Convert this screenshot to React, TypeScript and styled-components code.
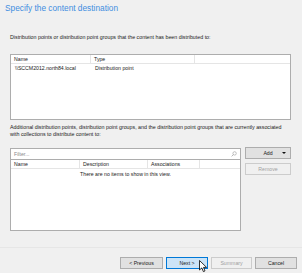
import styled, { createGlobalStyle } from "styled-components";

const Global = createGlobalStyle`
  html, body {
    margin: 0;
    padding: 0;
    background: #f0f0f0;
  }
  body {
    font-family: "Liberation Sans", Arial, sans-serif;
    color: #1a1a1a;
  }
`;

const Page = styled.div`
  width: 302px;
  height: 273px;
  box-sizing: border-box;
  display: flex;
  flex-direction: column;
  background: #f0f0f0;
  overflow: hidden;
`;

const Title = styled.div`
  font-size: 8.3px;
  color: #3f8ee0;
  padding: 2px 0 0 5px;
  height: 12px;
  line-height: 12px;
`;

const Body = styled.div`
  padding: 0 11px 0 10px;
  display: flex;
  flex-direction: column;
`;

const Label = styled.div<{ $top: number }>`
  font-size: 5.3px;
  line-height: 7px;
  max-width: 277px;
  margin-top: ${({ $top }) => $top}px;
`;

const ListBox = styled.div<{ $h: number; $top?: number }>`
  background: #fff;
  border: 1px solid #adadad;
  height: ${({ $h }) => $h}px;
  margin-top: ${({ $top }) => $top ?? 0}px;
  box-sizing: border-box;
  display: flex;
  flex-direction: column;
  font-size: 5.2px;
`;

const Header = styled.div`
  display: flex;
  height: 8px;
  border-bottom: 1px solid #e5e5e5;
`;

const HeadCell = styled.div<{ $w?: number }>`
  width: ${({ $w }) => ($w ? `${$w}px` : "auto")};
  flex: ${({ $w }) => ($w ? "none" : "1")};
  padding-left: 3px;
  line-height: 8px;
  border-right: ${({ $w }) => ($w ? "1px solid #e5e5e5" : "none")};
  box-sizing: border-box;
`;

const Row = styled.div`
  display: flex;
  height: 9px;
  line-height: 9px;
`;

const Cell = styled.div<{ $w?: number }>`
  width: ${({ $w }) => ($w ? `${$w}px` : "auto")};
  flex: ${({ $w }) => ($w ? "none" : "1")};
  padding-left: 4px;
  box-sizing: border-box;
`;

const Empty = styled.div`
  text-align: center;
  line-height: 9px;
  margin-top: 1px;
`;

const Split = styled.div`
  display: flex;
  gap: 4px;
  margin-top: 10px;
`;

const LeftCol = styled.div`
  width: 231px;
  display: flex;
  flex-direction: column;
`;

const RightCol = styled.div`
  flex: 1;
  display: flex;
  flex-direction: column;
  gap: 4px;
`;

const Filter = styled.div`
  height: 11px;
  background: #fff;
  border: 1px solid #adadad;
  border-bottom: none;
  box-sizing: border-box;
  display: flex;
  align-items: center;
  justify-content: space-between;
  padding: 0 3px;
  font-size: 5.2px;
  color: #8a8a8a;
`;

const Button = styled.div<{ $variant?: "primary" | "disabled" }>`
  height: 12px;
  box-sizing: border-box;
  display: flex;
  align-items: center;
  justify-content: center;
  position: relative;
  font-size: 5.2px;
  background: ${({ $variant }) =>
    $variant === "primary" ? "#cce4f7" : $variant === "disabled" ? "#f0f0f0" : "#e1e1e1"};
  border: 1px solid
    ${({ $variant }) =>
      $variant === "primary" ? "#0078d7" : $variant === "disabled" ? "#cccccc" : "#adadad"};
  color: ${({ $variant }) => ($variant === "disabled" ? "#a0a0a0" : "#1a1a1a")};
`;

const Caret = styled.span`
  position: absolute;
  right: 4px;
  top: 4px;
  width: 0;
  height: 0;
  border-left: 2.5px solid transparent;
  border-right: 2.5px solid transparent;
  border-top: 2.5px solid #111;
`;

const Footer = styled.div`
  margin-top: auto;
  height: 26px;
  box-sizing: border-box;
  border-top: 1px solid #e6e6e6;
  display: flex;
  justify-content: flex-end;
  align-items: flex-start;
  gap: 3px;
  padding: 9px 5px 0 0;
`;

const FootButton = styled(Button)<{ $w: number }>`
  width: ${({ $w }) => $w}px;
`;

const Cursor = styled.svg`
  position: absolute;
  left: 32px;
  top: 2px;
`;

export default function App() {
  return (
    <Page>
      <Global />
      <Title>Specify the content destination</Title>
      <Body>
        <Label $top={20}>
          Distribution points or distribution point groups that the content has been distributed to:
        </Label>
        <ListBox $h={66} $top={13}>
          <Header>
            <HeadCell $w={80}>Name</HeadCell>
            <HeadCell $w={104}>Type</HeadCell>
            <HeadCell />
          </Header>
          <Row>
            <Cell $w={80}>\\SCCM2012.north84.local</Cell>
            <Cell>Distribution point</Cell>
          </Row>
        </ListBox>
        <Label $top={4}>
          Additional distribution points, distribution point groups, and the distribution point groups that are currently associated with collections to distribute content to:
        </Label>
        <Split>
          <LeftCol>
            <Filter>
              <span>Filter...</span>
              <svg width="6" height="6" viewBox="0 0 6 6">
                <circle cx="3.6" cy="2.4" r="1.7" fill="none" stroke="#9a9a9a" strokeWidth="0.6" />
                <line x1="2.4" y1="3.6" x2="0.6" y2="5.4" stroke="#9a9a9a" strokeWidth="0.7" />
              </svg>
            </Filter>
            <ListBox $h={72}>
              <Header>
                <HeadCell $w={69}>Name</HeadCell>
                <HeadCell $w={68}>Description</HeadCell>
                <HeadCell $w={52}>Associations</HeadCell>
                <HeadCell />
              </Header>
              <Empty>There are no items to show in this view.</Empty>
            </ListBox>
          </LeftCol>
          <RightCol>
            <Button style={{ marginTop: -1 }}>
              Add
              <Caret />
            </Button>
            <Button $variant="disabled">Remove</Button>
          </RightCol>
        </Split>
      </Body>
      <Footer>
        <FootButton $w={43}>&lt; Previous</FootButton>
        <FootButton $w={42} $variant="primary">
          Next &gt;
          <Cursor width="9" height="13" viewBox="0 0 9 13">
            <path
              d="M0.5 0.5 L0.5 10 L2.8 7.9 L4.4 11.6 L6 10.9 L4.5 7.4 L7.6 7.4 Z"
              fill="#fff"
              stroke="#000"
              strokeWidth="0.8"
              strokeLinejoin="round"
            />
          </Cursor>
        </FootButton>
        <FootButton $w={41} $variant="disabled">Summary</FootButton>
        <FootButton $w={42}>Cancel</FootButton>
      </Footer>
    </Page>
  );
}
